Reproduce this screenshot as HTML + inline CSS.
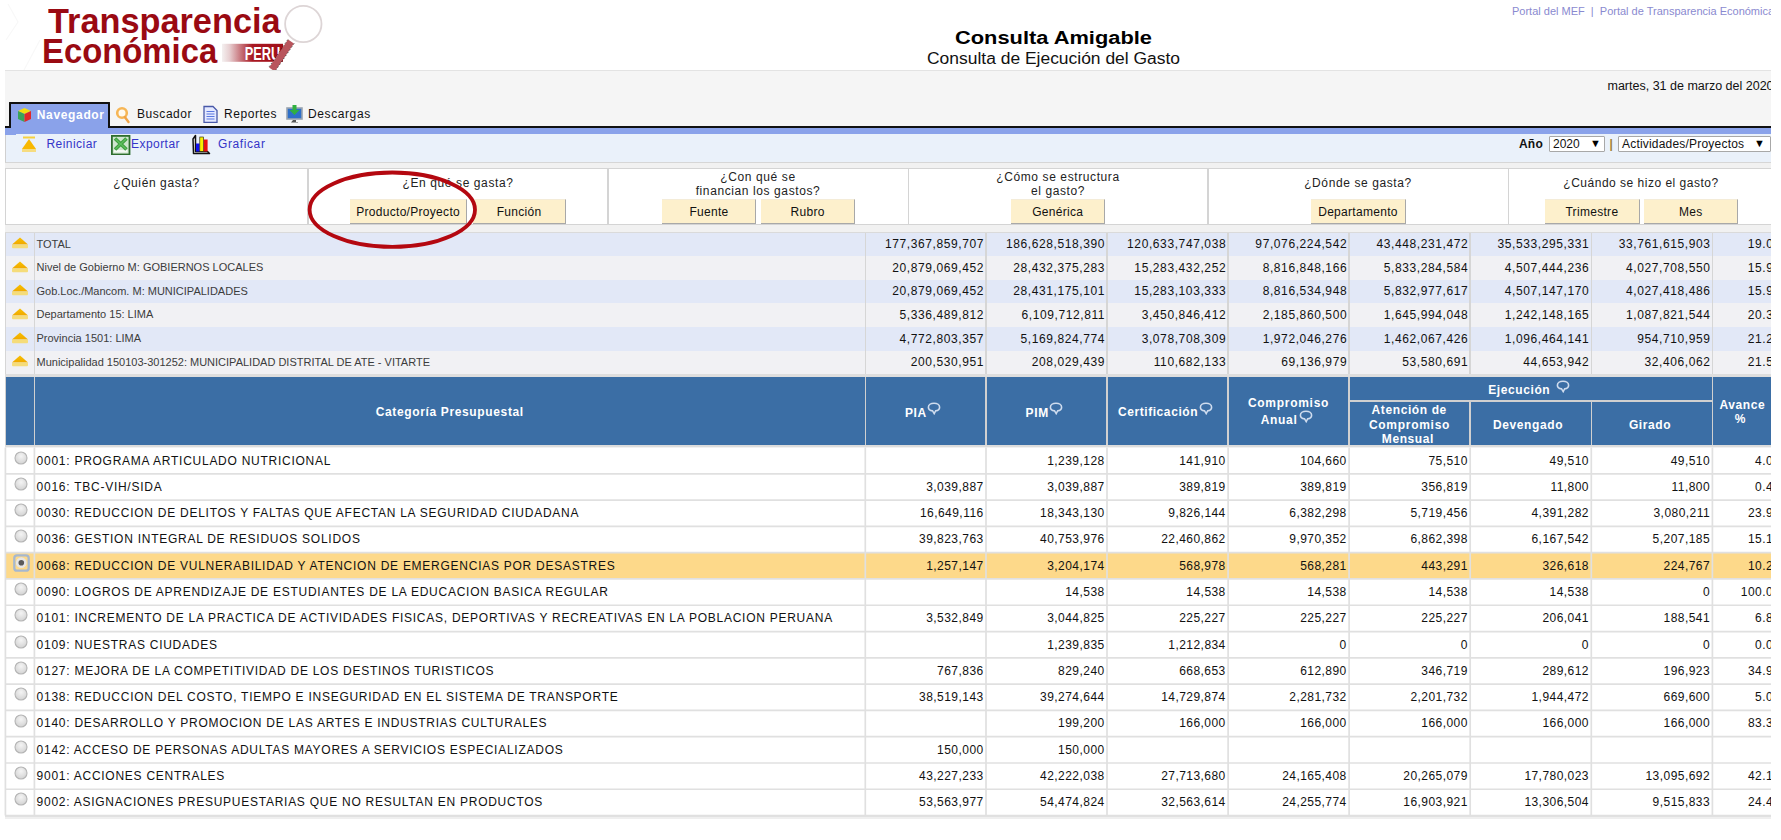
<!DOCTYPE html><html><head><meta charset="utf-8"><style>

html,body{margin:0;padding:0;background:#fff;}
body{width:1781px;height:840px;overflow:hidden;position:relative;font-family:"Liberation Sans", sans-serif;}
#pg{position:absolute;left:0;top:0;width:1771px;height:840px;overflow:hidden;}
.a{position:absolute;white-space:nowrap;}
.t{position:absolute;white-space:nowrap;line-height:14px;}

</style></head><body><div id="pg">
<svg class="a" style="left:0;top:0" width="60" height="70"><g stroke="#f8f8f8" stroke-width="1.2" fill="none"><path d="M8 4 L18 22 L6 40"/><path d="M24 70 L40 40"/></g></svg>
<div class="a" style="left:47.5px;top:0.5px;font-size:35.5px;font-weight:700;color:#9a0a12;line-height:40px;transform:scaleX(0.966);transform-origin:0 0">Transparencia</div>
<div class="a" style="left:41.5px;top:30.5px;font-size:35.5px;font-weight:700;color:#9a0a12;line-height:40px;transform:scaleX(0.925);transform-origin:0 0">Económica</div>
<svg class="a" style="left:220px;top:43px" width="66" height="20"><defs><linearGradient id="pg1" x1="0" x2="1"><stop offset="0" stop-color="#f4f0f0"/><stop offset="0.12" stop-color="#e8d0d2"/><stop offset="0.35" stop-color="#c06068"/><stop offset="0.5" stop-color="#a81822"/><stop offset="1" stop-color="#a00e18"/></linearGradient></defs><rect x="2" y="0.8" width="61" height="18" fill="url(#pg1)"/><text x="24.8" y="17.2" font-family="Liberation Sans" font-weight="700" font-size="17.5" fill="#fff" textLength="35.5" lengthAdjust="spacingAndGlyphs">PERU</text></svg>
<svg class="a" style="left:264px;top:2px" width="64" height="70"><circle cx="39.3" cy="22" r="18.2" fill="#fff" stroke="#ddd5d6" stroke-width="1.8"/><path d="M27 39.5 L8 67.5" stroke="#b9555d" stroke-width="7" stroke-linecap="butt"/><path d="M23.8 37.6 L4.6 65.6 M30.2 41.4 L11 69.4" stroke="#222" stroke-width="0.9" stroke-dasharray="1.5 2" opacity="0.8"/></svg>
<div class="a" style="left:954.5px;top:28px;font-size:18px;font-weight:700;color:#000;line-height:20px;transform:scaleX(1.213);transform-origin:0 0">Consulta Amigable</div>
<div class="a" style="left:927px;top:49.5px;font-size:16px;color:#111;line-height:18px;transform:scaleX(1.09);transform-origin:0 0">Consulta de Ejecución del Gasto</div>
<div class="a" style="left:1512px;top:4px;font-size:11px;color:#8a8ad0;line-height:14px">Portal del MEF&nbsp;&nbsp;|&nbsp;&nbsp;Portal de Transparencia Económica</div>
<div class="a" style="left:5px;top:70px;width:1766px;height:57px;background:#f5f5f5;border-top:1.5px solid #e3e3e3;box-sizing:border-box"></div>
<div class="a" style="left:1607.5px;top:78.7px;font-size:12.5px;color:#111;line-height:14px">martes, 31 de marzo del 2020</div>
<div class="a" style="left:5px;top:126px;width:1766px;height:2px;background:#111"></div>
<div class="a" style="left:5px;top:128px;width:1766px;height:6px;background:#8aa2ea"></div>
<div class="a" style="left:5px;top:133px;width:10.5px;height:1.6px;background:#8aa2ea;z-index:2"></div>
<div class="a" style="left:8.5px;top:101.5px;width:101px;height:26.5px;background:#8aa2ea;border:2px solid #111;border-bottom:none;box-sizing:border-box;border-radius:1px 1px 0 0"></div>
<div class="a" style="left:10.5px;top:126px;width:97px;height:3px;background:#8aa2ea"></div>
<svg class="a" style="left:17px;top:107px" width="15" height="16"><path d="M7.5 1 L14 4 L7.5 7 L1 4Z" fill="#f3dd10"/><path d="M1 4 L7.5 7 L7.5 15 L1 12Z" fill="#3aa35a"/><path d="M14 4 L7.5 7 L7.5 15 L14 12Z" fill="#e02828"/></svg>
<div class="t" style="left:36.8px;top:107.5px;font-size:12px;font-weight:700;color:#fff;letter-spacing:0.65px">Navegador</div>
<svg class="a" style="left:115px;top:105px" width="17" height="19"><circle cx="7" cy="8" r="4.8" fill="#fffaf0" stroke="#f6b656" stroke-width="2.6"/><path d="M9.8 12 L13.5 17" stroke="#f0a448" stroke-width="2.4" stroke-linecap="round"/></svg>
<div class="t" style="left:137px;top:107px;font-size:12px;color:#111;letter-spacing:0.55px">Buscador</div>
<svg class="a" style="left:203px;top:105px" width="15" height="18"><path d="M1 1.5 H10 L14 5.5 V17.5 H1Z" fill="#e4e9ff" stroke="#4858a8" stroke-width="1.3"/><g stroke="#5a78e0" stroke-width="1.1"><path d="M3.5 6.5H11.5M3.5 9H11.5M3.5 11.5H11.5M3.5 14H11.5"/></g></svg>
<div class="t" style="left:224px;top:107px;font-size:12px;color:#111;letter-spacing:0.55px">Reportes</div>
<svg class="a" style="left:286px;top:104px" width="17" height="19"><rect x="1" y="4" width="15" height="11" fill="#2f6fc8" stroke="#9aa4b0" stroke-width="1.6"/><path d="M7 16 H10 V18 H5 H12 V18.6 H5Z" fill="#555"/><path d="M6.5 1 H10.5 V6 H13.5 L8.5 11 L3.5 6 H6.5Z" fill="#30b040"/></svg>
<div class="t" style="left:308px;top:107px;font-size:12px;color:#111;letter-spacing:0.6px">Descargas</div>
<div class="a" style="left:5px;top:134px;width:1766px;height:28.5px;background:#eaf1fa;border-bottom:1.5px solid #d6d6d6;border-left:1.2px solid #d0d0d0;box-sizing:border-box"></div>
<svg class="a" style="left:20px;top:136px" width="18" height="18"><path d="M3 1.5 H15" stroke="#f6d040" stroke-width="2"/><path d="M9 3 L16 13 H2Z" fill="#f8b800"/><rect x="2" y="13" width="14" height="3" fill="#f6dc80"/></svg>
<div class="t" style="left:46.5px;top:137px;font-size:12px;color:#3535c8;letter-spacing:0.45px">Reiniciar</div>
<svg class="a" style="left:111px;top:134.5px" width="20" height="20"><rect x="0.9" y="0.9" width="17.6" height="18.6" fill="#cfe6cf" stroke="#2e6e2e" stroke-width="1.8"/><rect x="3" y="15" width="13.5" height="2.4" fill="#f4f8f4"/><path d="M4 3.5 L15.5 14.5 M15.5 3.5 L4 14.5" stroke="#3f9f3f" stroke-width="3.6"/><path d="M4.5 4 L15 14 M15 4 L4.5 14" stroke="#5fbf5f" stroke-width="1.2"/></svg>
<div class="t" style="left:131px;top:137px;font-size:12px;color:#3535c8;letter-spacing:0.45px">Exportar</div>
<svg class="a" style="left:190px;top:134px" width="21" height="21"><path d="M3 5 L5.5 1.5 V17.5 H17.5 L19.5 19.5 H3.5 Z" fill="#fff" stroke="#111" stroke-width="1.5" stroke-linejoin="round"/><rect x="6" y="9.5" width="3.6" height="8" fill="#1010f0"/><rect x="9.8" y="3" width="3.8" height="14.5" fill="#f8f000" stroke="#111" stroke-width="0.6"/><rect x="13.8" y="5.5" width="3.8" height="12" fill="#e81010"/></svg>
<div class="t" style="left:218px;top:137px;font-size:12px;color:#3535c8;letter-spacing:0.6px">Graficar</div>
<div class="t" style="left:1519px;top:137px;font-size:12px;font-weight:700;color:#111;letter-spacing:0.2px">Año</div>
<div class="a" style="left:1549px;top:135.7px;width:56px;height:16px;background:#fff;border:1px solid #a8a8a8;box-sizing:border-box;border-radius:1px"></div>
<div class="t" style="left:1553px;top:137px;font-size:12px;color:#111">2020</div>
<div class="t" style="left:1590px;top:136px;font-size:11px;color:#000">&#9660;</div>
<div class="t" style="left:1609.5px;top:137px;font-size:12px;font-weight:700;color:#a08030">|</div>
<div class="a" style="left:1617.5px;top:135.7px;width:153px;height:16px;background:#fff;border:1px solid #a8a8a8;box-sizing:border-box;border-radius:1px"></div>
<div class="t" style="left:1622px;top:137px;font-size:12px;color:#111;letter-spacing:0.2px">Actividades/Proyectos</div>
<div class="t" style="left:1754px;top:136px;font-size:11px;color:#000">&#9660;</div>
<div class="a" style="left:5px;top:162.5px;width:1766px;height:654px;background:#f1f1f1"></div>
<div class="a" style="left:5px;top:168px;width:1810px;height:57px;background:#fff;border:1.5px solid #d4d4d4;box-sizing:border-box"></div>
<div class="a" style="left:307.25px;top:168px;width:1.5px;height:57px;background:#d4d4d4"></div>
<div class="a" style="left:607.25px;top:168px;width:1.5px;height:57px;background:#d4d4d4"></div>
<div class="a" style="left:907.55px;top:168px;width:1.5px;height:57px;background:#d4d4d4"></div>
<div class="a" style="left:1207.45px;top:168px;width:1.5px;height:57px;background:#d4d4d4"></div>
<div class="a" style="left:1507.55px;top:168px;width:1.5px;height:57px;background:#d4d4d4"></div>
<div class="t" style="left:-43.5px;width:400px;text-align:center;top:176px;font-size:12px;color:#222;letter-spacing:0.6px;font-weight:400">¿Quién gasta?</div>
<div class="t" style="left:258px;width:400px;text-align:center;top:176px;font-size:12px;color:#222;letter-spacing:0.6px;font-weight:400">¿En qué se gasta?</div>
<div class="t" style="left:558px;width:400px;text-align:center;top:170px;font-size:12px;color:#222;letter-spacing:0.6px;font-weight:400">¿Con qué se</div>
<div class="t" style="left:558px;width:400px;text-align:center;top:184px;font-size:12px;color:#222;letter-spacing:0.6px;font-weight:400">financian los gastos?</div>
<div class="t" style="left:858px;width:400px;text-align:center;top:170px;font-size:12px;color:#222;letter-spacing:0.6px;font-weight:400">¿Cómo se estructura</div>
<div class="t" style="left:858px;width:400px;text-align:center;top:184px;font-size:12px;color:#222;letter-spacing:0.6px;font-weight:400">el gasto?</div>
<div class="t" style="left:1158px;width:400px;text-align:center;top:176px;font-size:12px;color:#222;letter-spacing:0.6px;font-weight:400">¿Dónde se gasta?</div>
<div class="t" style="left:1441px;width:400px;text-align:center;top:176px;font-size:12px;color:#222;letter-spacing:0.5px;font-weight:400">¿Cuándo se hizo el gasto?</div>
<div class="a" style="left:349.8px;top:198.7px;width:117.39999999999996px;height:25px;background:#fdf0cc;border-right:1.5px solid #a8a8a8;border-bottom:1.5px solid #a8a8a8;border-top:1px solid #f4ecd8;box-sizing:border-box"></div><div class="t" style="left:349.8px;width:116.59999999999997px;text-align:center;top:205px;font-size:12px;color:#111;letter-spacing:0.3px">Producto/Proyecto</div>
<div class="a" style="left:472.7px;top:198.7px;width:93.70000000000003px;height:25px;background:#fdf0cc;border-right:1.5px solid #a8a8a8;border-bottom:1.5px solid #a8a8a8;border-top:1px solid #f4ecd8;box-sizing:border-box"></div><div class="t" style="left:472.7px;width:92.90000000000003px;text-align:center;top:205px;font-size:12px;color:#111;letter-spacing:0.3px">Función</div>
<div class="a" style="left:662.3px;top:198.7px;width:94.20000000000009px;height:25px;background:#fdf0cc;border-right:1.5px solid #a8a8a8;border-bottom:1.5px solid #a8a8a8;border-top:1px solid #f4ecd8;box-sizing:border-box"></div><div class="t" style="left:662.3px;width:93.40000000000009px;text-align:center;top:205px;font-size:12px;color:#111;letter-spacing:0.3px">Fuente</div>
<div class="a" style="left:761px;top:198.7px;width:94.19999999999997px;height:25px;background:#fdf0cc;border-right:1.5px solid #a8a8a8;border-bottom:1.5px solid #a8a8a8;border-top:1px solid #f4ecd8;box-sizing:border-box"></div><div class="t" style="left:761px;width:93.39999999999998px;text-align:center;top:205px;font-size:12px;color:#111;letter-spacing:0.3px">Rubro</div>
<div class="a" style="left:1011px;top:198.7px;width:94.20000000000009px;height:25px;background:#fdf0cc;border-right:1.5px solid #a8a8a8;border-bottom:1.5px solid #a8a8a8;border-top:1px solid #f4ecd8;box-sizing:border-box"></div><div class="t" style="left:1011px;width:93.40000000000009px;text-align:center;top:205px;font-size:12px;color:#111;letter-spacing:0.3px">Genérica</div>
<div class="a" style="left:1311px;top:198.7px;width:94.8px;height:25px;background:#fdf0cc;border-right:1.5px solid #a8a8a8;border-bottom:1.5px solid #a8a8a8;border-top:1px solid #f4ecd8;box-sizing:border-box"></div><div class="t" style="left:1311px;width:94px;text-align:center;top:205px;font-size:12px;color:#111;letter-spacing:0.3px">Departamento</div>
<div class="a" style="left:1545px;top:198.7px;width:94.59999999999995px;height:25px;background:#fdf0cc;border-right:1.5px solid #a8a8a8;border-bottom:1.5px solid #a8a8a8;border-top:1px solid #f4ecd8;box-sizing:border-box"></div><div class="t" style="left:1545px;width:93.79999999999995px;text-align:center;top:205px;font-size:12px;color:#111;letter-spacing:0.3px">Trimestre</div>
<div class="a" style="left:1643.7px;top:198.7px;width:94.8px;height:25px;background:#fdf0cc;border-right:1.5px solid #a8a8a8;border-bottom:1.5px solid #a8a8a8;border-top:1px solid #f4ecd8;box-sizing:border-box"></div><div class="t" style="left:1643.7px;width:94.0px;text-align:center;top:205px;font-size:12px;color:#111;letter-spacing:0.3px">Mes</div>
<div class="a" style="left:5px;top:231.5px;width:1810px;height:1.5px;background:#dadada"></div>
<div class="a" style="left:5px;top:232.5px;width:1810px;height:23.73px;background:#e2e8f7"></div>
<svg class="a" style="left:11px;top:237.0px" width="18" height="12"><defs><linearGradient id="ag0" x1="0" y1="0" x2="0" y2="1"><stop offset="0" stop-color="#f8c000"/><stop offset="1" stop-color="#f0a800"/></linearGradient></defs><path d="M9 0.5 L17 7.5 H1Z" fill="url(#ag0)"/><rect x="1" y="7.5" width="16" height="3.8" rx="1" fill="#f5dc7a"/></svg>
<div class="t" style="left:36.5px;top:236.5px;font-size:11px;color:#3c3c3c">TOTAL</div>
<div class="t" style="left:565.3px;width:418.80000000000007px;text-align:right;top:237.0px;font-size:12px;color:#111;letter-spacing:0.6px">177,367,859,707</div>
<div class="t" style="left:686.0px;width:419.1px;text-align:right;top:237.0px;font-size:12px;color:#111;letter-spacing:0.6px">186,628,518,390</div>
<div class="t" style="left:807.0px;width:419.19999999999993px;text-align:right;top:237.0px;font-size:12px;color:#111;letter-spacing:0.6px">120,633,747,038</div>
<div class="t" style="left:928.0999999999999px;width:419.1px;text-align:right;top:237.0px;font-size:12px;color:#111;letter-spacing:0.6px">97,076,224,542</div>
<div class="t" style="left:1049.1px;width:419.20000000000016px;text-align:right;top:237.0px;font-size:12px;color:#111;letter-spacing:0.6px">43,448,231,472</div>
<div class="t" style="left:1170.2px;width:419.19999999999993px;text-align:right;top:237.0px;font-size:12px;color:#111;letter-spacing:0.6px">35,533,295,331</div>
<div class="t" style="left:1291.3px;width:419.20000000000016px;text-align:right;top:237.0px;font-size:12px;color:#111;letter-spacing:0.6px">33,761,615,903</div>
<div class="t" style="left:1412.4px;width:361.19999999999993px;text-align:right;top:237.0px;font-size:12px;color:#111;letter-spacing:0.6px">19.0</div>
<div class="a" style="left:5px;top:256.13px;width:1810px;height:23.73px;background:#f1f1f4"></div>
<svg class="a" style="left:11px;top:260.63px" width="18" height="12"><defs><linearGradient id="ag1" x1="0" y1="0" x2="0" y2="1"><stop offset="0" stop-color="#f8c000"/><stop offset="1" stop-color="#f0a800"/></linearGradient></defs><path d="M9 0.5 L17 7.5 H1Z" fill="url(#ag1)"/><rect x="1" y="7.5" width="16" height="3.8" rx="1" fill="#f5dc7a"/></svg>
<div class="t" style="left:36.5px;top:260.13px;font-size:11px;color:#3c3c3c">Nivel de Gobierno M: GOBIERNOS LOCALES</div>
<div class="t" style="left:565.3px;width:418.80000000000007px;text-align:right;top:260.63px;font-size:12px;color:#111;letter-spacing:0.6px">20,879,069,452</div>
<div class="t" style="left:686.0px;width:419.1px;text-align:right;top:260.63px;font-size:12px;color:#111;letter-spacing:0.6px">28,432,375,283</div>
<div class="t" style="left:807.0px;width:419.19999999999993px;text-align:right;top:260.63px;font-size:12px;color:#111;letter-spacing:0.6px">15,283,432,252</div>
<div class="t" style="left:928.0999999999999px;width:419.1px;text-align:right;top:260.63px;font-size:12px;color:#111;letter-spacing:0.6px">8,816,848,166</div>
<div class="t" style="left:1049.1px;width:419.20000000000016px;text-align:right;top:260.63px;font-size:12px;color:#111;letter-spacing:0.6px">5,833,284,584</div>
<div class="t" style="left:1170.2px;width:419.19999999999993px;text-align:right;top:260.63px;font-size:12px;color:#111;letter-spacing:0.6px">4,507,444,236</div>
<div class="t" style="left:1291.3px;width:419.20000000000016px;text-align:right;top:260.63px;font-size:12px;color:#111;letter-spacing:0.6px">4,027,708,550</div>
<div class="t" style="left:1412.4px;width:361.19999999999993px;text-align:right;top:260.63px;font-size:12px;color:#111;letter-spacing:0.6px">15.9</div>
<div class="a" style="left:5px;top:279.76px;width:1810px;height:23.73px;background:#e2e8f7"></div>
<svg class="a" style="left:11px;top:284.26px" width="18" height="12"><defs><linearGradient id="ag2" x1="0" y1="0" x2="0" y2="1"><stop offset="0" stop-color="#f8c000"/><stop offset="1" stop-color="#f0a800"/></linearGradient></defs><path d="M9 0.5 L17 7.5 H1Z" fill="url(#ag2)"/><rect x="1" y="7.5" width="16" height="3.8" rx="1" fill="#f5dc7a"/></svg>
<div class="t" style="left:36.5px;top:283.76px;font-size:11px;color:#3c3c3c">Gob.Loc./Mancom. M: MUNICIPALIDADES</div>
<div class="t" style="left:565.3px;width:418.80000000000007px;text-align:right;top:284.26px;font-size:12px;color:#111;letter-spacing:0.6px">20,879,069,452</div>
<div class="t" style="left:686.0px;width:419.1px;text-align:right;top:284.26px;font-size:12px;color:#111;letter-spacing:0.6px">28,431,175,101</div>
<div class="t" style="left:807.0px;width:419.19999999999993px;text-align:right;top:284.26px;font-size:12px;color:#111;letter-spacing:0.6px">15,283,103,333</div>
<div class="t" style="left:928.0999999999999px;width:419.1px;text-align:right;top:284.26px;font-size:12px;color:#111;letter-spacing:0.6px">8,816,534,948</div>
<div class="t" style="left:1049.1px;width:419.20000000000016px;text-align:right;top:284.26px;font-size:12px;color:#111;letter-spacing:0.6px">5,832,977,617</div>
<div class="t" style="left:1170.2px;width:419.19999999999993px;text-align:right;top:284.26px;font-size:12px;color:#111;letter-spacing:0.6px">4,507,147,170</div>
<div class="t" style="left:1291.3px;width:419.20000000000016px;text-align:right;top:284.26px;font-size:12px;color:#111;letter-spacing:0.6px">4,027,418,486</div>
<div class="t" style="left:1412.4px;width:361.19999999999993px;text-align:right;top:284.26px;font-size:12px;color:#111;letter-spacing:0.6px">15.9</div>
<div class="a" style="left:5px;top:303.39px;width:1810px;height:23.73px;background:#f1f1f4"></div>
<svg class="a" style="left:11px;top:307.89px" width="18" height="12"><defs><linearGradient id="ag3" x1="0" y1="0" x2="0" y2="1"><stop offset="0" stop-color="#f8c000"/><stop offset="1" stop-color="#f0a800"/></linearGradient></defs><path d="M9 0.5 L17 7.5 H1Z" fill="url(#ag3)"/><rect x="1" y="7.5" width="16" height="3.8" rx="1" fill="#f5dc7a"/></svg>
<div class="t" style="left:36.5px;top:307.39px;font-size:11px;color:#3c3c3c">Departamento 15: LIMA</div>
<div class="t" style="left:565.3px;width:418.80000000000007px;text-align:right;top:307.89px;font-size:12px;color:#111;letter-spacing:0.6px">5,336,489,812</div>
<div class="t" style="left:686.0px;width:419.1px;text-align:right;top:307.89px;font-size:12px;color:#111;letter-spacing:0.6px">6,109,712,811</div>
<div class="t" style="left:807.0px;width:419.19999999999993px;text-align:right;top:307.89px;font-size:12px;color:#111;letter-spacing:0.6px">3,450,846,412</div>
<div class="t" style="left:928.0999999999999px;width:419.1px;text-align:right;top:307.89px;font-size:12px;color:#111;letter-spacing:0.6px">2,185,860,500</div>
<div class="t" style="left:1049.1px;width:419.20000000000016px;text-align:right;top:307.89px;font-size:12px;color:#111;letter-spacing:0.6px">1,645,994,048</div>
<div class="t" style="left:1170.2px;width:419.19999999999993px;text-align:right;top:307.89px;font-size:12px;color:#111;letter-spacing:0.6px">1,242,148,165</div>
<div class="t" style="left:1291.3px;width:419.20000000000016px;text-align:right;top:307.89px;font-size:12px;color:#111;letter-spacing:0.6px">1,087,821,544</div>
<div class="t" style="left:1412.4px;width:361.19999999999993px;text-align:right;top:307.89px;font-size:12px;color:#111;letter-spacing:0.6px">20.3</div>
<div class="a" style="left:5px;top:327.02px;width:1810px;height:23.73px;background:#e2e8f7"></div>
<svg class="a" style="left:11px;top:331.52px" width="18" height="12"><defs><linearGradient id="ag4" x1="0" y1="0" x2="0" y2="1"><stop offset="0" stop-color="#f8c000"/><stop offset="1" stop-color="#f0a800"/></linearGradient></defs><path d="M9 0.5 L17 7.5 H1Z" fill="url(#ag4)"/><rect x="1" y="7.5" width="16" height="3.8" rx="1" fill="#f5dc7a"/></svg>
<div class="t" style="left:36.5px;top:331.02px;font-size:11px;color:#3c3c3c">Provincia 1501: LIMA</div>
<div class="t" style="left:565.3px;width:418.80000000000007px;text-align:right;top:331.52px;font-size:12px;color:#111;letter-spacing:0.6px">4,772,803,357</div>
<div class="t" style="left:686.0px;width:419.1px;text-align:right;top:331.52px;font-size:12px;color:#111;letter-spacing:0.6px">5,169,824,774</div>
<div class="t" style="left:807.0px;width:419.19999999999993px;text-align:right;top:331.52px;font-size:12px;color:#111;letter-spacing:0.6px">3,078,708,309</div>
<div class="t" style="left:928.0999999999999px;width:419.1px;text-align:right;top:331.52px;font-size:12px;color:#111;letter-spacing:0.6px">1,972,046,276</div>
<div class="t" style="left:1049.1px;width:419.20000000000016px;text-align:right;top:331.52px;font-size:12px;color:#111;letter-spacing:0.6px">1,462,067,426</div>
<div class="t" style="left:1170.2px;width:419.19999999999993px;text-align:right;top:331.52px;font-size:12px;color:#111;letter-spacing:0.6px">1,096,464,141</div>
<div class="t" style="left:1291.3px;width:419.20000000000016px;text-align:right;top:331.52px;font-size:12px;color:#111;letter-spacing:0.6px">954,710,959</div>
<div class="t" style="left:1412.4px;width:361.19999999999993px;text-align:right;top:331.52px;font-size:12px;color:#111;letter-spacing:0.6px">21.2</div>
<div class="a" style="left:5px;top:350.65px;width:1810px;height:23.73px;background:#f1f1f4"></div>
<svg class="a" style="left:11px;top:355.15px" width="18" height="12"><defs><linearGradient id="ag5" x1="0" y1="0" x2="0" y2="1"><stop offset="0" stop-color="#f8c000"/><stop offset="1" stop-color="#f0a800"/></linearGradient></defs><path d="M9 0.5 L17 7.5 H1Z" fill="url(#ag5)"/><rect x="1" y="7.5" width="16" height="3.8" rx="1" fill="#f5dc7a"/></svg>
<div class="t" style="left:36.5px;top:354.65px;font-size:11px;color:#3c3c3c">Municipalidad 150103-301252: MUNICIPALIDAD DISTRITAL DE ATE - VITARTE</div>
<div class="t" style="left:565.3px;width:418.80000000000007px;text-align:right;top:355.15px;font-size:12px;color:#111;letter-spacing:0.6px">200,530,951</div>
<div class="t" style="left:686.0px;width:419.1px;text-align:right;top:355.15px;font-size:12px;color:#111;letter-spacing:0.6px">208,029,439</div>
<div class="t" style="left:807.0px;width:419.19999999999993px;text-align:right;top:355.15px;font-size:12px;color:#111;letter-spacing:0.6px">110,682,133</div>
<div class="t" style="left:928.0999999999999px;width:419.1px;text-align:right;top:355.15px;font-size:12px;color:#111;letter-spacing:0.6px">69,136,979</div>
<div class="t" style="left:1049.1px;width:419.20000000000016px;text-align:right;top:355.15px;font-size:12px;color:#111;letter-spacing:0.6px">53,580,691</div>
<div class="t" style="left:1170.2px;width:419.19999999999993px;text-align:right;top:355.15px;font-size:12px;color:#111;letter-spacing:0.6px">44,653,942</div>
<div class="t" style="left:1291.3px;width:419.20000000000016px;text-align:right;top:355.15px;font-size:12px;color:#111;letter-spacing:0.6px">32,406,062</div>
<div class="t" style="left:1412.4px;width:361.19999999999993px;text-align:right;top:355.15px;font-size:12px;color:#111;letter-spacing:0.6px">21.5</div>
<div class="a" style="left:33.65px;top:232.5px;width:1.5px;height:141.78px;background:#d6d6d6"></div>
<div class="a" style="left:864.55px;top:232.5px;width:1.5px;height:141.78px;background:#d6d6d6"></div>
<div class="a" style="left:985.25px;top:232.5px;width:1.5px;height:141.78px;background:#d6d6d6"></div>
<div class="a" style="left:1106.25px;top:232.5px;width:1.5px;height:141.78px;background:#d6d6d6"></div>
<div class="a" style="left:1227.35px;top:232.5px;width:1.5px;height:141.78px;background:#d6d6d6"></div>
<div class="a" style="left:1348.35px;top:232.5px;width:1.5px;height:141.78px;background:#d6d6d6"></div>
<div class="a" style="left:1469.45px;top:232.5px;width:1.5px;height:141.78px;background:#d6d6d6"></div>
<div class="a" style="left:1590.55px;top:232.5px;width:1.5px;height:141.78px;background:#d6d6d6"></div>
<div class="a" style="left:1711.65px;top:232.5px;width:1.5px;height:141.78px;background:#d6d6d6"></div>
<div class="a" style="left:1774.75px;top:232.5px;width:1.5px;height:141.78px;background:#d6d6d6"></div>
<div class="a" style="left:4.65px;top:232.5px;width:1.5px;height:141.78px;background:#d6d6d6"></div>
<div class="a" style="left:5px;top:374.28px;width:1810px;height:2.5200000000000387px;background:#dedede"></div>
<div class="a" style="left:5px;top:376.8px;width:1810px;height:68.39999999999998px;background:#3b6ea5"></div>
<div class="a" style="left:4.65px;top:376.8px;width:1.5px;height:68.39999999999998px;background:#d0d0d0"></div>
<div class="a" style="left:33.65px;top:376.8px;width:1.5px;height:68.39999999999998px;background:#d0d0d0"></div>
<div class="a" style="left:864.55px;top:376.8px;width:1.5px;height:68.39999999999998px;background:#d0d0d0"></div>
<div class="a" style="left:985.25px;top:376.8px;width:1.5px;height:68.39999999999998px;background:#d0d0d0"></div>
<div class="a" style="left:1106.25px;top:376.8px;width:1.5px;height:68.39999999999998px;background:#d0d0d0"></div>
<div class="a" style="left:1227.35px;top:376.8px;width:1.5px;height:68.39999999999998px;background:#d0d0d0"></div>
<div class="a" style="left:1348.35px;top:376.8px;width:1.5px;height:68.39999999999998px;background:#d0d0d0"></div>
<div class="a" style="left:1469.45px;top:401px;width:1.5px;height:44.19999999999999px;background:#d0d0d0"></div>
<div class="a" style="left:1590.55px;top:401px;width:1.5px;height:44.19999999999999px;background:#d0d0d0"></div>
<div class="a" style="left:1711.65px;top:376.8px;width:1.5px;height:68.39999999999998px;background:#d0d0d0"></div>
<div class="a" style="left:1349.1px;top:400.3px;width:363.3000000000002px;height:1.5px;background:#d0d0d0"></div>
<div class="t" style="left:375.7px;top:405.34px;font-size:12px;font-weight:700;color:#fff;letter-spacing:0.64px">Categoría Presupuestal</div>
<div class="t" style="left:904.9px;top:405.53999999999996px;font-size:12px;font-weight:700;color:#fff;letter-spacing:0.6px">PIA</div>
<svg width="14" height="13" style="position:absolute;left:927px;top:401.5px"><path d="M7 1.2 C10.3 1.2 12.6 3 12.6 5.2 C12.6 7.2 10.8 8.6 8.6 8.9 L7.2 11.6 L5.6 8.9 C3.2 8.6 1.4 7.2 1.4 5.2 C1.4 3 3.7 1.2 7 1.2Z" fill="none" stroke="#cfdcee" stroke-width="1.6"/></svg>
<div class="t" style="left:1025.6px;top:405.53999999999996px;font-size:12px;font-weight:700;color:#fff;letter-spacing:0.6px">PIM</div>
<svg width="14" height="13" style="position:absolute;left:1048.5px;top:401.5px"><path d="M7 1.2 C10.3 1.2 12.6 3 12.6 5.2 C12.6 7.2 10.8 8.6 8.6 8.9 L7.2 11.6 L5.6 8.9 C3.2 8.6 1.4 7.2 1.4 5.2 C1.4 3 3.7 1.2 7 1.2Z" fill="none" stroke="#cfdcee" stroke-width="1.6"/></svg>
<div class="t" style="left:1117.9px;top:405.34px;font-size:12px;font-weight:700;color:#fff;letter-spacing:0.58px">Certificación</div>
<svg width="14" height="13" style="position:absolute;left:1199px;top:401.5px"><path d="M7 1.2 C10.3 1.2 12.6 3 12.6 5.2 C12.6 7.2 10.8 8.6 8.6 8.9 L7.2 11.6 L5.6 8.9 C3.2 8.6 1.4 7.2 1.4 5.2 C1.4 3 3.7 1.2 7 1.2Z" fill="none" stroke="#cfdcee" stroke-width="1.6"/></svg>
<div class="t" style="left:1247.9px;top:395.94px;font-size:12px;font-weight:700;color:#fff;letter-spacing:0.72px">Compromiso</div>
<div class="t" style="left:1260.7px;top:412.73999999999995px;font-size:12px;font-weight:700;color:#fff;letter-spacing:0.7px">Anual</div>
<svg width="14" height="13" style="position:absolute;left:1299px;top:409.5px"><path d="M7 1.2 C10.3 1.2 12.6 3 12.6 5.2 C12.6 7.2 10.8 8.6 8.6 8.9 L7.2 11.6 L5.6 8.9 C3.2 8.6 1.4 7.2 1.4 5.2 C1.4 3 3.7 1.2 7 1.2Z" fill="none" stroke="#cfdcee" stroke-width="1.6"/></svg>
<div class="t" style="left:1488.2px;top:383.14px;font-size:12px;font-weight:700;color:#fff;letter-spacing:0.6px">Ejecución</div>
<svg width="14" height="13" style="position:absolute;left:1555.5px;top:379.5px"><path d="M7 1.2 C10.3 1.2 12.6 3 12.6 5.2 C12.6 7.2 10.8 8.6 8.6 8.9 L7.2 11.6 L5.6 8.9 C3.2 8.6 1.4 7.2 1.4 5.2 C1.4 3 3.7 1.2 7 1.2Z" fill="none" stroke="#cfdcee" stroke-width="1.6"/></svg>
<div class="t" style="left:1371.6px;top:402.84px;font-size:12px;font-weight:700;color:#fff;letter-spacing:0.6px">Atención de</div>
<div class="t" style="left:1368.9px;top:417.73999999999995px;font-size:12px;font-weight:700;color:#fff;letter-spacing:0.72px">Compromiso</div>
<div class="t" style="left:1381.8px;top:431.73999999999995px;font-size:12px;font-weight:700;color:#fff;letter-spacing:0.6px">Mensual</div>
<div class="t" style="left:1493.0px;top:417.73999999999995px;font-size:12px;font-weight:700;color:#fff;letter-spacing:0.6px">Devengado</div>
<div class="t" style="left:1628.9px;top:417.73999999999995px;font-size:12px;font-weight:700;color:#fff;letter-spacing:0.6px">Girado</div>
<div class="t" style="left:1719.4px;top:398.03999999999996px;font-size:12px;font-weight:700;color:#fff;letter-spacing:0.6px">Avance</div>
<div class="t" style="left:1734.8px;top:412.03999999999996px;font-size:12px;font-weight:700;color:#fff;letter-spacing:0.6px">%</div>
<div class="a" style="left:5px;top:445.2px;width:1810px;height:2.3000000000000114px;background:#dcdcdc"></div>
<div class="a" style="left:5px;top:447.5px;width:1810px;height:26.29px;background:#fff"></div>
<div class="a" style="left:5px;top:473.79px;width:1810px;height:26.29px;background:#fff"></div>
<div class="a" style="left:5px;top:500.08px;width:1810px;height:26.29px;background:#fff"></div>
<div class="a" style="left:5px;top:526.37px;width:1810px;height:26.29px;background:#fff"></div>
<div class="a" style="left:5px;top:552.66px;width:1810px;height:26.29px;background:#fdd98a"></div>
<div class="a" style="left:5px;top:578.95px;width:1810px;height:26.29px;background:#fff"></div>
<div class="a" style="left:5px;top:605.24px;width:1810px;height:26.29px;background:#fff"></div>
<div class="a" style="left:5px;top:631.53px;width:1810px;height:26.29px;background:#fff"></div>
<div class="a" style="left:5px;top:657.8199999999999px;width:1810px;height:26.29px;background:#fff"></div>
<div class="a" style="left:5px;top:684.11px;width:1810px;height:26.29px;background:#fff"></div>
<div class="a" style="left:5px;top:710.4px;width:1810px;height:26.29px;background:#fff"></div>
<div class="a" style="left:5px;top:736.69px;width:1810px;height:26.29px;background:#fff"></div>
<div class="a" style="left:5px;top:762.98px;width:1810px;height:26.29px;background:#fff"></div>
<div class="a" style="left:5px;top:789.27px;width:1810px;height:26.29px;background:#fff"></div>
<svg class="a" style="left:0;top:0;z-index:1" width="1781" height="840"><g stroke="#e0e0e0" stroke-width="1.7" fill="none"><path d="M5 473.79 H1781" /><path d="M5 500.08 H1781" /><path d="M5 526.37 H1781" /><path d="M5 552.66 H1781" /><path d="M5 578.95 H1781" /><path d="M5 605.24 H1781" /><path d="M5 631.53 H1781" /><path d="M5 657.82 H1781" /><path d="M5 684.11 H1781" /><path d="M5 710.40 H1781" /><path d="M5 736.69 H1781" /><path d="M5 762.98 H1781" /><path d="M5 789.27 H1781" /><path d="M5 815.56 H1781" /><path d="M5.40 447.5 V815.56" /><path d="M34.40 447.5 V815.56" /><path d="M865.30 447.5 V815.56" /><path d="M986.00 447.5 V815.56" /><path d="M1107.00 447.5 V815.56" /><path d="M1228.10 447.5 V815.56" /><path d="M1349.10 447.5 V815.56" /><path d="M1470.20 447.5 V815.56" /><path d="M1591.30 447.5 V815.56" /><path d="M1712.40 447.5 V815.56" /></g></svg>
<svg class="a" style="left:13.5px;top:450.6px" width="14" height="14"><defs><radialGradient id="rg0" cx="0.5" cy="0.35" r="0.7"><stop offset="0" stop-color="#f4f4f4"/><stop offset="1" stop-color="#d0d0d0"/></radialGradient></defs><circle cx="7" cy="7" r="6" fill="url(#rg0)" stroke="#b4b4b4" stroke-width="1.1"/></svg>
<div class="t" style="left:36.6px;top:453.5px;font-size:12px;color:#111;letter-spacing:0.74px">0001: PROGRAMA ARTICULADO NUTRICIONAL</div>
<div class="t" style="left:565.3px;width:418.35px;text-align:right;top:453.5px;font-size:12px;color:#111;letter-spacing:0.45px"></div>
<div class="t" style="left:686.0px;width:418.65px;text-align:right;top:453.5px;font-size:12px;color:#111;letter-spacing:0.45px">1,239,128</div>
<div class="t" style="left:807.0px;width:418.7499999999999px;text-align:right;top:453.5px;font-size:12px;color:#111;letter-spacing:0.45px">141,910</div>
<div class="t" style="left:928.0999999999999px;width:418.65px;text-align:right;top:453.5px;font-size:12px;color:#111;letter-spacing:0.45px">104,660</div>
<div class="t" style="left:1049.1px;width:418.7500000000001px;text-align:right;top:453.5px;font-size:12px;color:#111;letter-spacing:0.45px">75,510</div>
<div class="t" style="left:1170.2px;width:418.7499999999999px;text-align:right;top:453.5px;font-size:12px;color:#111;letter-spacing:0.45px">49,510</div>
<div class="t" style="left:1291.3px;width:418.7500000000001px;text-align:right;top:453.5px;font-size:12px;color:#111;letter-spacing:0.45px">49,510</div>
<div class="t" style="left:1412.4px;width:360.7499999999999px;text-align:right;top:453.5px;font-size:12px;color:#111;letter-spacing:0.45px">4.0</div>
<svg class="a" style="left:13.5px;top:476.89000000000004px" width="14" height="14"><defs><radialGradient id="rg1" cx="0.5" cy="0.35" r="0.7"><stop offset="0" stop-color="#f4f4f4"/><stop offset="1" stop-color="#d0d0d0"/></radialGradient></defs><circle cx="7" cy="7" r="6" fill="url(#rg1)" stroke="#b4b4b4" stroke-width="1.1"/></svg>
<div class="t" style="left:36.6px;top:479.79px;font-size:12px;color:#111;letter-spacing:0.74px">0016: TBC-VIH/SIDA</div>
<div class="t" style="left:565.3px;width:418.35px;text-align:right;top:479.79px;font-size:12px;color:#111;letter-spacing:0.45px">3,039,887</div>
<div class="t" style="left:686.0px;width:418.65px;text-align:right;top:479.79px;font-size:12px;color:#111;letter-spacing:0.45px">3,039,887</div>
<div class="t" style="left:807.0px;width:418.7499999999999px;text-align:right;top:479.79px;font-size:12px;color:#111;letter-spacing:0.45px">389,819</div>
<div class="t" style="left:928.0999999999999px;width:418.65px;text-align:right;top:479.79px;font-size:12px;color:#111;letter-spacing:0.45px">389,819</div>
<div class="t" style="left:1049.1px;width:418.7500000000001px;text-align:right;top:479.79px;font-size:12px;color:#111;letter-spacing:0.45px">356,819</div>
<div class="t" style="left:1170.2px;width:418.7499999999999px;text-align:right;top:479.79px;font-size:12px;color:#111;letter-spacing:0.45px">11,800</div>
<div class="t" style="left:1291.3px;width:418.7500000000001px;text-align:right;top:479.79px;font-size:12px;color:#111;letter-spacing:0.45px">11,800</div>
<div class="t" style="left:1412.4px;width:360.7499999999999px;text-align:right;top:479.79px;font-size:12px;color:#111;letter-spacing:0.45px">0.4</div>
<svg class="a" style="left:13.5px;top:503.18px" width="14" height="14"><defs><radialGradient id="rg2" cx="0.5" cy="0.35" r="0.7"><stop offset="0" stop-color="#f4f4f4"/><stop offset="1" stop-color="#d0d0d0"/></radialGradient></defs><circle cx="7" cy="7" r="6" fill="url(#rg2)" stroke="#b4b4b4" stroke-width="1.1"/></svg>
<div class="t" style="left:36.6px;top:506.08px;font-size:12px;color:#111;letter-spacing:0.74px">0030: REDUCCION DE DELITOS Y FALTAS QUE AFECTAN LA SEGURIDAD CIUDADANA</div>
<div class="t" style="left:565.3px;width:418.35px;text-align:right;top:506.08px;font-size:12px;color:#111;letter-spacing:0.45px">16,649,116</div>
<div class="t" style="left:686.0px;width:418.65px;text-align:right;top:506.08px;font-size:12px;color:#111;letter-spacing:0.45px">18,343,130</div>
<div class="t" style="left:807.0px;width:418.7499999999999px;text-align:right;top:506.08px;font-size:12px;color:#111;letter-spacing:0.45px">9,826,144</div>
<div class="t" style="left:928.0999999999999px;width:418.65px;text-align:right;top:506.08px;font-size:12px;color:#111;letter-spacing:0.45px">6,382,298</div>
<div class="t" style="left:1049.1px;width:418.7500000000001px;text-align:right;top:506.08px;font-size:12px;color:#111;letter-spacing:0.45px">5,719,456</div>
<div class="t" style="left:1170.2px;width:418.7499999999999px;text-align:right;top:506.08px;font-size:12px;color:#111;letter-spacing:0.45px">4,391,282</div>
<div class="t" style="left:1291.3px;width:418.7500000000001px;text-align:right;top:506.08px;font-size:12px;color:#111;letter-spacing:0.45px">3,080,211</div>
<div class="t" style="left:1412.4px;width:360.7499999999999px;text-align:right;top:506.08px;font-size:12px;color:#111;letter-spacing:0.45px">23.9</div>
<svg class="a" style="left:13.5px;top:529.47px" width="14" height="14"><defs><radialGradient id="rg3" cx="0.5" cy="0.35" r="0.7"><stop offset="0" stop-color="#f4f4f4"/><stop offset="1" stop-color="#d0d0d0"/></radialGradient></defs><circle cx="7" cy="7" r="6" fill="url(#rg3)" stroke="#b4b4b4" stroke-width="1.1"/></svg>
<div class="t" style="left:36.6px;top:532.37px;font-size:12px;color:#111;letter-spacing:0.74px">0036: GESTION INTEGRAL DE RESIDUOS SOLIDOS</div>
<div class="t" style="left:565.3px;width:418.35px;text-align:right;top:532.37px;font-size:12px;color:#111;letter-spacing:0.45px">39,823,763</div>
<div class="t" style="left:686.0px;width:418.65px;text-align:right;top:532.37px;font-size:12px;color:#111;letter-spacing:0.45px">40,753,976</div>
<div class="t" style="left:807.0px;width:418.7499999999999px;text-align:right;top:532.37px;font-size:12px;color:#111;letter-spacing:0.45px">22,460,862</div>
<div class="t" style="left:928.0999999999999px;width:418.65px;text-align:right;top:532.37px;font-size:12px;color:#111;letter-spacing:0.45px">9,970,352</div>
<div class="t" style="left:1049.1px;width:418.7500000000001px;text-align:right;top:532.37px;font-size:12px;color:#111;letter-spacing:0.45px">6,862,398</div>
<div class="t" style="left:1170.2px;width:418.7499999999999px;text-align:right;top:532.37px;font-size:12px;color:#111;letter-spacing:0.45px">6,167,542</div>
<div class="t" style="left:1291.3px;width:418.7500000000001px;text-align:right;top:532.37px;font-size:12px;color:#111;letter-spacing:0.45px">5,207,185</div>
<div class="t" style="left:1412.4px;width:360.7499999999999px;text-align:right;top:532.37px;font-size:12px;color:#111;letter-spacing:0.45px">15.1</div>
<svg class="a" style="left:13px;top:554.16px" width="17" height="18"><rect x="1.3" y="1.3" width="14.4" height="15.4" rx="2.8" fill="none" stroke="#a6b8cf" stroke-width="2.3"/><circle cx="8.3" cy="8.7" r="4.1" fill="#5a5a5a" stroke="#e6e6e6" stroke-width="2.6"/></svg>
<div class="t" style="left:36.6px;top:558.66px;font-size:12px;color:#111;letter-spacing:0.74px">0068: REDUCCION DE VULNERABILIDAD Y ATENCION DE EMERGENCIAS POR DESASTRES</div>
<div class="t" style="left:565.3px;width:418.35px;text-align:right;top:558.66px;font-size:12px;color:#111;letter-spacing:0.45px">1,257,147</div>
<div class="t" style="left:686.0px;width:418.65px;text-align:right;top:558.66px;font-size:12px;color:#111;letter-spacing:0.45px">3,204,174</div>
<div class="t" style="left:807.0px;width:418.7499999999999px;text-align:right;top:558.66px;font-size:12px;color:#111;letter-spacing:0.45px">568,978</div>
<div class="t" style="left:928.0999999999999px;width:418.65px;text-align:right;top:558.66px;font-size:12px;color:#111;letter-spacing:0.45px">568,281</div>
<div class="t" style="left:1049.1px;width:418.7500000000001px;text-align:right;top:558.66px;font-size:12px;color:#111;letter-spacing:0.45px">443,291</div>
<div class="t" style="left:1170.2px;width:418.7499999999999px;text-align:right;top:558.66px;font-size:12px;color:#111;letter-spacing:0.45px">326,618</div>
<div class="t" style="left:1291.3px;width:418.7500000000001px;text-align:right;top:558.66px;font-size:12px;color:#111;letter-spacing:0.45px">224,767</div>
<div class="t" style="left:1412.4px;width:360.7499999999999px;text-align:right;top:558.66px;font-size:12px;color:#111;letter-spacing:0.45px">10.2</div>
<svg class="a" style="left:13.5px;top:582.0500000000001px" width="14" height="14"><defs><radialGradient id="rg5" cx="0.5" cy="0.35" r="0.7"><stop offset="0" stop-color="#f4f4f4"/><stop offset="1" stop-color="#d0d0d0"/></radialGradient></defs><circle cx="7" cy="7" r="6" fill="url(#rg5)" stroke="#b4b4b4" stroke-width="1.1"/></svg>
<div class="t" style="left:36.6px;top:584.95px;font-size:12px;color:#111;letter-spacing:0.74px">0090: LOGROS DE APRENDIZAJE DE ESTUDIANTES DE LA EDUCACION BASICA REGULAR</div>
<div class="t" style="left:565.3px;width:418.35px;text-align:right;top:584.95px;font-size:12px;color:#111;letter-spacing:0.45px"></div>
<div class="t" style="left:686.0px;width:418.65px;text-align:right;top:584.95px;font-size:12px;color:#111;letter-spacing:0.45px">14,538</div>
<div class="t" style="left:807.0px;width:418.7499999999999px;text-align:right;top:584.95px;font-size:12px;color:#111;letter-spacing:0.45px">14,538</div>
<div class="t" style="left:928.0999999999999px;width:418.65px;text-align:right;top:584.95px;font-size:12px;color:#111;letter-spacing:0.45px">14,538</div>
<div class="t" style="left:1049.1px;width:418.7500000000001px;text-align:right;top:584.95px;font-size:12px;color:#111;letter-spacing:0.45px">14,538</div>
<div class="t" style="left:1170.2px;width:418.7499999999999px;text-align:right;top:584.95px;font-size:12px;color:#111;letter-spacing:0.45px">14,538</div>
<div class="t" style="left:1291.3px;width:418.7500000000001px;text-align:right;top:584.95px;font-size:12px;color:#111;letter-spacing:0.45px">0</div>
<div class="t" style="left:1412.4px;width:360.7499999999999px;text-align:right;top:584.95px;font-size:12px;color:#111;letter-spacing:0.45px">100.0</div>
<svg class="a" style="left:13.5px;top:608.34px" width="14" height="14"><defs><radialGradient id="rg6" cx="0.5" cy="0.35" r="0.7"><stop offset="0" stop-color="#f4f4f4"/><stop offset="1" stop-color="#d0d0d0"/></radialGradient></defs><circle cx="7" cy="7" r="6" fill="url(#rg6)" stroke="#b4b4b4" stroke-width="1.1"/></svg>
<div class="t" style="left:36.6px;top:611.24px;font-size:12px;color:#111;letter-spacing:0.74px">0101: INCREMENTO DE LA PRACTICA DE ACTIVIDADES FISICAS, DEPORTIVAS Y RECREATIVAS EN LA POBLACION PERUANA</div>
<div class="t" style="left:565.3px;width:418.35px;text-align:right;top:611.24px;font-size:12px;color:#111;letter-spacing:0.45px">3,532,849</div>
<div class="t" style="left:686.0px;width:418.65px;text-align:right;top:611.24px;font-size:12px;color:#111;letter-spacing:0.45px">3,044,825</div>
<div class="t" style="left:807.0px;width:418.7499999999999px;text-align:right;top:611.24px;font-size:12px;color:#111;letter-spacing:0.45px">225,227</div>
<div class="t" style="left:928.0999999999999px;width:418.65px;text-align:right;top:611.24px;font-size:12px;color:#111;letter-spacing:0.45px">225,227</div>
<div class="t" style="left:1049.1px;width:418.7500000000001px;text-align:right;top:611.24px;font-size:12px;color:#111;letter-spacing:0.45px">225,227</div>
<div class="t" style="left:1170.2px;width:418.7499999999999px;text-align:right;top:611.24px;font-size:12px;color:#111;letter-spacing:0.45px">206,041</div>
<div class="t" style="left:1291.3px;width:418.7500000000001px;text-align:right;top:611.24px;font-size:12px;color:#111;letter-spacing:0.45px">188,541</div>
<div class="t" style="left:1412.4px;width:360.7499999999999px;text-align:right;top:611.24px;font-size:12px;color:#111;letter-spacing:0.45px">6.8</div>
<svg class="a" style="left:13.5px;top:634.63px" width="14" height="14"><defs><radialGradient id="rg7" cx="0.5" cy="0.35" r="0.7"><stop offset="0" stop-color="#f4f4f4"/><stop offset="1" stop-color="#d0d0d0"/></radialGradient></defs><circle cx="7" cy="7" r="6" fill="url(#rg7)" stroke="#b4b4b4" stroke-width="1.1"/></svg>
<div class="t" style="left:36.6px;top:637.53px;font-size:12px;color:#111;letter-spacing:0.74px">0109: NUESTRAS CIUDADES</div>
<div class="t" style="left:565.3px;width:418.35px;text-align:right;top:637.53px;font-size:12px;color:#111;letter-spacing:0.45px"></div>
<div class="t" style="left:686.0px;width:418.65px;text-align:right;top:637.53px;font-size:12px;color:#111;letter-spacing:0.45px">1,239,835</div>
<div class="t" style="left:807.0px;width:418.7499999999999px;text-align:right;top:637.53px;font-size:12px;color:#111;letter-spacing:0.45px">1,212,834</div>
<div class="t" style="left:928.0999999999999px;width:418.65px;text-align:right;top:637.53px;font-size:12px;color:#111;letter-spacing:0.45px">0</div>
<div class="t" style="left:1049.1px;width:418.7500000000001px;text-align:right;top:637.53px;font-size:12px;color:#111;letter-spacing:0.45px">0</div>
<div class="t" style="left:1170.2px;width:418.7499999999999px;text-align:right;top:637.53px;font-size:12px;color:#111;letter-spacing:0.45px">0</div>
<div class="t" style="left:1291.3px;width:418.7500000000001px;text-align:right;top:637.53px;font-size:12px;color:#111;letter-spacing:0.45px">0</div>
<div class="t" style="left:1412.4px;width:360.7499999999999px;text-align:right;top:637.53px;font-size:12px;color:#111;letter-spacing:0.45px">0.0</div>
<svg class="a" style="left:13.5px;top:660.92px" width="14" height="14"><defs><radialGradient id="rg8" cx="0.5" cy="0.35" r="0.7"><stop offset="0" stop-color="#f4f4f4"/><stop offset="1" stop-color="#d0d0d0"/></radialGradient></defs><circle cx="7" cy="7" r="6" fill="url(#rg8)" stroke="#b4b4b4" stroke-width="1.1"/></svg>
<div class="t" style="left:36.6px;top:663.8199999999999px;font-size:12px;color:#111;letter-spacing:0.74px">0127: MEJORA DE LA COMPETITIVIDAD DE LOS DESTINOS TURISTICOS</div>
<div class="t" style="left:565.3px;width:418.35px;text-align:right;top:663.8199999999999px;font-size:12px;color:#111;letter-spacing:0.45px">767,836</div>
<div class="t" style="left:686.0px;width:418.65px;text-align:right;top:663.8199999999999px;font-size:12px;color:#111;letter-spacing:0.45px">829,240</div>
<div class="t" style="left:807.0px;width:418.7499999999999px;text-align:right;top:663.8199999999999px;font-size:12px;color:#111;letter-spacing:0.45px">668,653</div>
<div class="t" style="left:928.0999999999999px;width:418.65px;text-align:right;top:663.8199999999999px;font-size:12px;color:#111;letter-spacing:0.45px">612,890</div>
<div class="t" style="left:1049.1px;width:418.7500000000001px;text-align:right;top:663.8199999999999px;font-size:12px;color:#111;letter-spacing:0.45px">346,719</div>
<div class="t" style="left:1170.2px;width:418.7499999999999px;text-align:right;top:663.8199999999999px;font-size:12px;color:#111;letter-spacing:0.45px">289,612</div>
<div class="t" style="left:1291.3px;width:418.7500000000001px;text-align:right;top:663.8199999999999px;font-size:12px;color:#111;letter-spacing:0.45px">196,923</div>
<div class="t" style="left:1412.4px;width:360.7499999999999px;text-align:right;top:663.8199999999999px;font-size:12px;color:#111;letter-spacing:0.45px">34.9</div>
<svg class="a" style="left:13.5px;top:687.21px" width="14" height="14"><defs><radialGradient id="rg9" cx="0.5" cy="0.35" r="0.7"><stop offset="0" stop-color="#f4f4f4"/><stop offset="1" stop-color="#d0d0d0"/></radialGradient></defs><circle cx="7" cy="7" r="6" fill="url(#rg9)" stroke="#b4b4b4" stroke-width="1.1"/></svg>
<div class="t" style="left:36.6px;top:690.11px;font-size:12px;color:#111;letter-spacing:0.74px">0138: REDUCCION DEL COSTO, TIEMPO E INSEGURIDAD EN EL SISTEMA DE TRANSPORTE</div>
<div class="t" style="left:565.3px;width:418.35px;text-align:right;top:690.11px;font-size:12px;color:#111;letter-spacing:0.45px">38,519,143</div>
<div class="t" style="left:686.0px;width:418.65px;text-align:right;top:690.11px;font-size:12px;color:#111;letter-spacing:0.45px">39,274,644</div>
<div class="t" style="left:807.0px;width:418.7499999999999px;text-align:right;top:690.11px;font-size:12px;color:#111;letter-spacing:0.45px">14,729,874</div>
<div class="t" style="left:928.0999999999999px;width:418.65px;text-align:right;top:690.11px;font-size:12px;color:#111;letter-spacing:0.45px">2,281,732</div>
<div class="t" style="left:1049.1px;width:418.7500000000001px;text-align:right;top:690.11px;font-size:12px;color:#111;letter-spacing:0.45px">2,201,732</div>
<div class="t" style="left:1170.2px;width:418.7499999999999px;text-align:right;top:690.11px;font-size:12px;color:#111;letter-spacing:0.45px">1,944,472</div>
<div class="t" style="left:1291.3px;width:418.7500000000001px;text-align:right;top:690.11px;font-size:12px;color:#111;letter-spacing:0.45px">669,600</div>
<div class="t" style="left:1412.4px;width:360.7499999999999px;text-align:right;top:690.11px;font-size:12px;color:#111;letter-spacing:0.45px">5.0</div>
<svg class="a" style="left:13.5px;top:713.5px" width="14" height="14"><defs><radialGradient id="rg10" cx="0.5" cy="0.35" r="0.7"><stop offset="0" stop-color="#f4f4f4"/><stop offset="1" stop-color="#d0d0d0"/></radialGradient></defs><circle cx="7" cy="7" r="6" fill="url(#rg10)" stroke="#b4b4b4" stroke-width="1.1"/></svg>
<div class="t" style="left:36.6px;top:716.4px;font-size:12px;color:#111;letter-spacing:0.74px">0140: DESARROLLO Y PROMOCION DE LAS ARTES E INDUSTRIAS CULTURALES</div>
<div class="t" style="left:565.3px;width:418.35px;text-align:right;top:716.4px;font-size:12px;color:#111;letter-spacing:0.45px"></div>
<div class="t" style="left:686.0px;width:418.65px;text-align:right;top:716.4px;font-size:12px;color:#111;letter-spacing:0.45px">199,200</div>
<div class="t" style="left:807.0px;width:418.7499999999999px;text-align:right;top:716.4px;font-size:12px;color:#111;letter-spacing:0.45px">166,000</div>
<div class="t" style="left:928.0999999999999px;width:418.65px;text-align:right;top:716.4px;font-size:12px;color:#111;letter-spacing:0.45px">166,000</div>
<div class="t" style="left:1049.1px;width:418.7500000000001px;text-align:right;top:716.4px;font-size:12px;color:#111;letter-spacing:0.45px">166,000</div>
<div class="t" style="left:1170.2px;width:418.7499999999999px;text-align:right;top:716.4px;font-size:12px;color:#111;letter-spacing:0.45px">166,000</div>
<div class="t" style="left:1291.3px;width:418.7500000000001px;text-align:right;top:716.4px;font-size:12px;color:#111;letter-spacing:0.45px">166,000</div>
<div class="t" style="left:1412.4px;width:360.7499999999999px;text-align:right;top:716.4px;font-size:12px;color:#111;letter-spacing:0.45px">83.3</div>
<svg class="a" style="left:13.5px;top:739.7900000000001px" width="14" height="14"><defs><radialGradient id="rg11" cx="0.5" cy="0.35" r="0.7"><stop offset="0" stop-color="#f4f4f4"/><stop offset="1" stop-color="#d0d0d0"/></radialGradient></defs><circle cx="7" cy="7" r="6" fill="url(#rg11)" stroke="#b4b4b4" stroke-width="1.1"/></svg>
<div class="t" style="left:36.6px;top:742.69px;font-size:12px;color:#111;letter-spacing:0.74px">0142: ACCESO DE PERSONAS ADULTAS MAYORES A SERVICIOS ESPECIALIZADOS</div>
<div class="t" style="left:565.3px;width:418.35px;text-align:right;top:742.69px;font-size:12px;color:#111;letter-spacing:0.45px">150,000</div>
<div class="t" style="left:686.0px;width:418.65px;text-align:right;top:742.69px;font-size:12px;color:#111;letter-spacing:0.45px">150,000</div>
<div class="t" style="left:807.0px;width:418.7499999999999px;text-align:right;top:742.69px;font-size:12px;color:#111;letter-spacing:0.45px"></div>
<div class="t" style="left:928.0999999999999px;width:418.65px;text-align:right;top:742.69px;font-size:12px;color:#111;letter-spacing:0.45px"></div>
<div class="t" style="left:1049.1px;width:418.7500000000001px;text-align:right;top:742.69px;font-size:12px;color:#111;letter-spacing:0.45px"></div>
<div class="t" style="left:1170.2px;width:418.7499999999999px;text-align:right;top:742.69px;font-size:12px;color:#111;letter-spacing:0.45px"></div>
<div class="t" style="left:1291.3px;width:418.7500000000001px;text-align:right;top:742.69px;font-size:12px;color:#111;letter-spacing:0.45px"></div>
<div class="t" style="left:1412.4px;width:360.7499999999999px;text-align:right;top:742.69px;font-size:12px;color:#111;letter-spacing:0.45px"></div>
<svg class="a" style="left:13.5px;top:766.08px" width="14" height="14"><defs><radialGradient id="rg12" cx="0.5" cy="0.35" r="0.7"><stop offset="0" stop-color="#f4f4f4"/><stop offset="1" stop-color="#d0d0d0"/></radialGradient></defs><circle cx="7" cy="7" r="6" fill="url(#rg12)" stroke="#b4b4b4" stroke-width="1.1"/></svg>
<div class="t" style="left:36.6px;top:768.98px;font-size:12px;color:#111;letter-spacing:0.74px">9001: ACCIONES CENTRALES</div>
<div class="t" style="left:565.3px;width:418.35px;text-align:right;top:768.98px;font-size:12px;color:#111;letter-spacing:0.45px">43,227,233</div>
<div class="t" style="left:686.0px;width:418.65px;text-align:right;top:768.98px;font-size:12px;color:#111;letter-spacing:0.45px">42,222,038</div>
<div class="t" style="left:807.0px;width:418.7499999999999px;text-align:right;top:768.98px;font-size:12px;color:#111;letter-spacing:0.45px">27,713,680</div>
<div class="t" style="left:928.0999999999999px;width:418.65px;text-align:right;top:768.98px;font-size:12px;color:#111;letter-spacing:0.45px">24,165,408</div>
<div class="t" style="left:1049.1px;width:418.7500000000001px;text-align:right;top:768.98px;font-size:12px;color:#111;letter-spacing:0.45px">20,265,079</div>
<div class="t" style="left:1170.2px;width:418.7499999999999px;text-align:right;top:768.98px;font-size:12px;color:#111;letter-spacing:0.45px">17,780,023</div>
<div class="t" style="left:1291.3px;width:418.7500000000001px;text-align:right;top:768.98px;font-size:12px;color:#111;letter-spacing:0.45px">13,095,692</div>
<div class="t" style="left:1412.4px;width:360.7499999999999px;text-align:right;top:768.98px;font-size:12px;color:#111;letter-spacing:0.45px">42.1</div>
<svg class="a" style="left:13.5px;top:792.37px" width="14" height="14"><defs><radialGradient id="rg13" cx="0.5" cy="0.35" r="0.7"><stop offset="0" stop-color="#f4f4f4"/><stop offset="1" stop-color="#d0d0d0"/></radialGradient></defs><circle cx="7" cy="7" r="6" fill="url(#rg13)" stroke="#b4b4b4" stroke-width="1.1"/></svg>
<div class="t" style="left:36.6px;top:795.27px;font-size:12px;color:#111;letter-spacing:0.74px">9002: ASIGNACIONES PRESUPUESTARIAS QUE NO RESULTAN EN PRODUCTOS</div>
<div class="t" style="left:565.3px;width:418.35px;text-align:right;top:795.27px;font-size:12px;color:#111;letter-spacing:0.45px">53,563,977</div>
<div class="t" style="left:686.0px;width:418.65px;text-align:right;top:795.27px;font-size:12px;color:#111;letter-spacing:0.45px">54,474,824</div>
<div class="t" style="left:807.0px;width:418.7499999999999px;text-align:right;top:795.27px;font-size:12px;color:#111;letter-spacing:0.45px">32,563,614</div>
<div class="t" style="left:928.0999999999999px;width:418.65px;text-align:right;top:795.27px;font-size:12px;color:#111;letter-spacing:0.45px">24,255,774</div>
<div class="t" style="left:1049.1px;width:418.7500000000001px;text-align:right;top:795.27px;font-size:12px;color:#111;letter-spacing:0.45px">16,903,921</div>
<div class="t" style="left:1170.2px;width:418.7499999999999px;text-align:right;top:795.27px;font-size:12px;color:#111;letter-spacing:0.45px">13,306,504</div>
<div class="t" style="left:1291.3px;width:418.7500000000001px;text-align:right;top:795.27px;font-size:12px;color:#111;letter-spacing:0.45px">9,515,833</div>
<div class="t" style="left:1412.4px;width:360.7499999999999px;text-align:right;top:795.27px;font-size:12px;color:#111;letter-spacing:0.45px">24.4</div>
<div class="a" style="left:5px;top:815.56px;width:1810px;height:1.5px;background:#e2e2e2"></div>
<div class="a" style="left:5px;top:817.06px;width:1810px;height:2px;background:#efefef"></div>
<div class="a" style="left:0px;top:819.06px;width:1781px;height:24.440000000000055px;background:#fff"></div>
<svg class="a" style="left:300px;top:166px" width="185" height="90"><ellipse cx="92.3" cy="43.7" rx="82.7" ry="37.2" fill="none" stroke="#b40810" stroke-width="3.8"/></svg>
</div></body></html>
